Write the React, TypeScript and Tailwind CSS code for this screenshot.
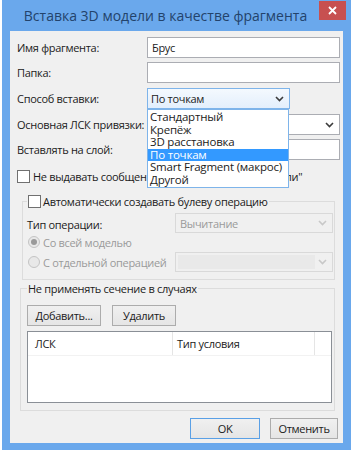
import type { ReactNode } from 'react';

const insertModes = [
  'Стандартный',
  'Крепёж',
  '3D расстановка',
  'По точкам',
  'Smart Fragment (макрос)',
  'Другой',
];

function Chevron({ className }: { className?: string }) {
  return (
    <svg width="9" height="6" viewBox="0 0 9 6" className={className}>
      <path d="M1 1l3.5 3.5L8 1" fill="none" stroke="currentColor" strokeWidth="1.6" />
    </svg>
  );
}

function Checkbox() {
  return <span className="w-[13px] h-[13px] shrink-0 bg-white border border-[#707070]" />;
}

function Radio({ checked }: { checked?: boolean }) {
  return (
    <span className="w-[12px] h-[12px] shrink-0 rounded-full border border-[#c4c4c4] bg-[#e8e8e8] flex items-center justify-center">
      {checked && <span className="w-[6px] h-[6px] rounded-full bg-[#9a9a9a]" />}
    </span>
  );
}

function Button({ children, primary, className }: { children: ReactNode; primary?: boolean; className?: string }) {
  return (
    <button
      className={`h-[21px] flex items-center justify-center bg-gradient-to-b from-[#f0f0f0] to-[#e5e5e5] border ${
        primary ? 'border-[#5aa0e6]' : 'border-[#acacac]'
      } ${className ?? ''}`}
    >
      {children}
    </button>
  );
}

function Row({ label, children, className }: { label: string; children: ReactNode; className?: string }) {
  return (
    <div className={`flex items-center h-[21px] pl-[7px] pr-[3px] ${className ?? ''}`}>
      <span className="w-[130px] shrink-0 whitespace-nowrap">{label}</span>
      {children}
    </div>
  );
}

export default function App() {
  return (
    <div className="w-[355px] h-[456px] bg-white font-['Open_Sans','Noto_Sans',sans-serif] text-[11px] tracking-[-0.3px] leading-none text-[#1b1b1b]">
      <div className="ml-[2px] w-[349px] h-[450px] bg-[#6aa8ec] flex flex-col">
        {/* Title bar */}
        <div className="relative h-[31px] shrink-0 flex items-center justify-center pr-[22px]">
          <span className="text-[14px] tracking-normal text-[#23436b]">Вставка 3D модели в качестве фрагмента</span>
          <button className="absolute right-[5px] top-[1px] w-[27px] h-[19px] bg-[#c75050] text-white flex items-center justify-center">
            <svg width="9" height="9" viewBox="0 0 9 9">
              <path d="M1 1l7 7M8 1l-7 7" stroke="currentColor" strokeWidth="1.8" />
            </svg>
          </button>
        </div>

        {/* Client area */}
        <div className="flex-1 mx-[8px] mb-[7px] bg-[#f0f0f0] flex flex-col">
          <Row label="Имя фрагмента:" className="mt-[6px]">
            <div className="flex-1 h-full bg-white border border-[#abadb3] flex items-center px-[4px]">Брус</div>
          </Row>
          <Row label="Папка:" className="mt-[4px]">
            <div className="flex-1 h-full bg-white border border-[#abadb3]" />
          </Row>
          <Row label="Способ вставки:" className="mt-[5px] relative z-10">
            <div className="relative w-[143px] h-full">
              <div className="h-full border border-[#7eb4ea] bg-gradient-to-b from-[#f4f9fe] to-[#e3effc] flex items-center justify-between pl-[3px] pr-[5px]">
                <span>По точкам</span>
                <Chevron className="text-[#3c3c3c]" />
              </div>
              <ul className="absolute left-0 top-full w-[142px] bg-white border border-[#7eb4ea] py-[1px] text-[11.5px] tracking-[-0.2px]">
                {insertModes.map((mode) => (
                  <li
                    key={mode}
                    className={`h-[12.5px] leading-[12.5px] pl-[2px] whitespace-nowrap ${
                      mode === 'По точкам' ? 'bg-[#3399ff] text-white' : ''
                    }`}
                  >
                    {mode}
                  </li>
                ))}
              </ul>
            </div>
          </Row>
          <Row label="Основная ЛСК привязки:" className="mt-[5px]">
            <div className="flex-1 h-full bg-white border border-[#abadb3] flex items-center justify-end pr-[5px]">
              <Chevron className="text-[#3c3c3c]" />
            </div>
          </Row>
          <Row label="Вставлять на слой:" className="mt-[4px]">
            <div className="flex-1 h-full bg-white border border-[#abadb3]" />
          </Row>

          <label className="mt-[9px] ml-[7px] flex items-center gap-[3px] h-[14px] whitespace-nowrap">
            <Checkbox />
            <span>Не выдавать сообщение о "Несоответствии модели"</span>
          </label>

          {/* Boolean operation group */}
          <fieldset className="mt-[11px] ml-[12px] mr-[8px] border border-[#dcdcdc] pb-[7px] pr-[1px]">
            <legend className="ml-[4px] px-[1px] flex items-center gap-[2px] h-[14px]">
              <Checkbox />
              <span>Автоматически создавать булеву операцию</span>
            </legend>
            <div className="mt-[5px] flex items-center h-[20px] pl-[4px]">
              <span className="w-[148px] shrink-0 pt-[3px]">Тип операции:</span>
              <div className="flex-1 h-full border border-[#d9d9d9] bg-[#f0f0f0] flex items-center justify-between pl-[4px] pr-[5px] text-[#9a9a9a]">
                <span>Вычитание</span>
                <Chevron className="text-[#c8c8c8]" />
              </div>
            </div>
            <div className="mt-[1px] flex items-center h-[16px] pl-[5px] gap-[3px] text-[#9a9a9a]">
              <Radio checked />
              <span>Со всей моделью</span>
            </div>
            <div className="mt-[2px] flex items-center h-[20px] pl-[5px]">
              <div className="w-[147px] shrink-0 flex items-center gap-[3px] text-[#9a9a9a] whitespace-nowrap">
                <Radio />
                <span>С отдельной операцией</span>
              </div>
              <div className="flex-1 h-full border border-[#d9d9d9] bg-[#f0f0f0] flex items-center justify-between p-[2px] pr-[5px]">
                <span className="w-[137px] h-full bg-[#e9e9e9]" />
                <Chevron className="text-[#c8c8c8]" />
              </div>
            </div>
          </fieldset>

          {/* Section exceptions group */}
          <fieldset className="mt-[2px] ml-[10px] mr-[8px] border border-[#dcdcdc] pb-[7px] pl-[6px] pr-[2px]">
            <legend className="px-[1px] h-[13px] flex items-center">Не применять сечение в случаях</legend>
            <div className="mt-[10px] flex gap-[11px]">
              <Button className="w-[74px]">Добавить...</Button>
              <Button className="w-[64px]">Удалить</Button>
            </div>
            <div className="mt-[5px] h-[72px] bg-white border border-[#8a8f96]">
              <div className="flex h-[24px] border-b border-[#f2f2f2]">
                <div className="w-[145px] border-r border-[#e5e5e5] flex items-center pl-[7px]">ЛСК</div>
                <div className="w-[142px] border-r border-[#e5e5e5] flex items-center pl-[4px]">Тип условия</div>
                <div className="flex-1" />
              </div>
            </div>
          </fieldset>

          <div className="mt-[7px] flex justify-end gap-[10px] pr-[5px]">
            <Button primary className="w-[70px]">
              OK
            </Button>
            <Button className="w-[68px]">Отменить</Button>
          </div>
        </div>
      </div>
    </div>
  );
}
